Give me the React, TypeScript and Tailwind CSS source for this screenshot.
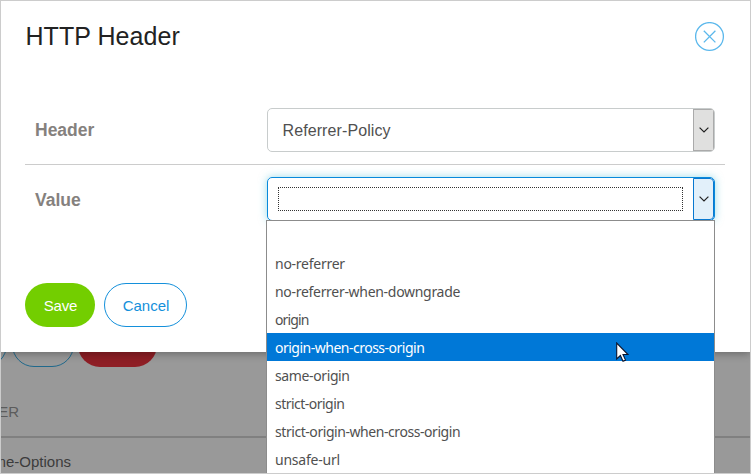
import React from "react";

const options = [
  { name: "", tracking: "" },
  { name: "no-referrer", tracking: "tracking-[-0.26px]" },
  { name: "no-referrer-when-downgrade", tracking: "tracking-[-0.3px]" },
  { name: "origin", tracking: "tracking-[-0.85px]" },
  { name: "origin-when-cross-origin", tracking: "tracking-[-0.5px]" },
  { name: "same-origin", tracking: "tracking-[-0.38px]" },
  { name: "strict-origin", tracking: "tracking-[-0.52px]" },
  { name: "strict-origin-when-cross-origin", tracking: "tracking-[-0.44px]" },
  { name: "unsafe-url", tracking: "tracking-[-0.22px]" },
];

function Chevron() {
  return (
    <svg width="10" height="6" viewBox="0 0 10 6" fill="none" stroke="#222" strokeWidth="1.2">
      <path d="M.6.6L5 5 9.4.6" />
    </svg>
  );
}

function Page() {
  return (
    <div className="flex h-full flex-col bg-[#999] pt-[322px]">
      <div className="-ml-[60px] flex h-11">
        <div className="mr-[5px] w-[66px] rounded-full border border-[#20698c]" />
        <div className="mr-1 w-[62px] rounded-full border border-[#20698c]" />
        <div className="w-[79px] rounded-full bg-[#8e1e25]" />
      </div>
      <div className="flex h-[71px] items-end border-b-2 border-[#808080] pb-[14px]">
        <div className="flex w-[18px] shrink-0 justify-end whitespace-nowrap text-[15px] leading-5 text-[#5c5c5c]">HEADER</div>
      </div>
      <div className="flex w-[70px] justify-end whitespace-nowrap pt-[14px] text-[15px] leading-5 text-[#3c3c3c]">X-Frame-Options</div>
    </div>
  );
}

function Menu() {
  return (
    <ul className="absolute -left-[2px] top-[42px] h-[254px] w-[449px] overflow-hidden border-x border-t border-[#8c8c8c] bg-white font-['Noto_Sans','Open_Sans',sans-serif] text-[14px] text-[#505050]">
      {options.map(({ name, tracking }) => (
        <li
          key={name}
          className={
            "h-7 pl-2 leading-[30px] " +
            tracking +
            (name === "origin-when-cross-origin" ? " bg-[#0078d7] text-white" : "")
          }
        >
          {name}
        </li>
      ))}
      <svg className="absolute left-[349px] top-[121px]" width="13" height="20" viewBox="0 0 13 20">
        <path d="M.7 1v16l3.7-3.5 2.6 5.7 2.5-1.1L7 12.5h5z" fill="#fff" stroke="#08132c" strokeWidth="1.1" />
      </svg>
    </ul>
  );
}

function Dialog() {
  return (
    <div className="absolute inset-x-0 top-0 h-[351px] bg-white px-6 shadow-[0_2px_8px_rgba(0,0,0,0.3)]">
      <div className="flex h-[97px] items-start justify-between pt-5">
        <h1 className="pl-[0.5px] text-[25px] leading-[30px] tracking-[0.05px] text-[#222]">HTTP Header</h1>
        <svg className="mr-px mt-px" width="30" height="30" viewBox="0 0 30 30" fill="none" stroke="#5bb8ec" strokeWidth="1.3">
          <circle cx="14.5" cy="14.5" r="13.9" />
          <path d="M8.8 8.8l11.6 11.6M20.4 8.8L8.8 20.4" />
        </svg>
      </div>
      <div className="flex h-[67px] w-[700px] items-start border-b border-[#ccc] pl-[10px] pt-[10px]">
        <label className="w-[232px] text-[17.5px] font-bold leading-[44px] text-[#85817e]">Header</label>
        <div className="flex h-11 w-[448px] overflow-hidden rounded-[5px] border border-[#c8cccc]">
          <div className="flex-1 pl-[14.5px] text-[16px] leading-[44px] tracking-[0.1px] text-[#505050]">Referrer-Policy</div>
          <div className="flex w-[21px] items-center justify-center border border-[#aaa] bg-[#e0e0df]">
            <Chevron />
          </div>
        </div>
      </div>
      <div className="flex h-[118px] items-start pl-[10px] pt-3">
        <label className="w-[232px] text-[17.5px] font-bold leading-[46px] text-[#85817e]">Value</label>
        <div className="relative flex h-11 w-[448px] rounded-[5px] border border-[#0889dc] shadow-[0_0_8px_rgba(70,190,215,0.55)]">
          <div className="flex-1 py-[9px] pl-[10px] pr-[10px]">
            <div className="h-6 border border-dotted border-[#333]" />
          </div>
          <div className="flex w-[21px] items-center justify-center rounded-r border border-[#0878d0] bg-[#e2f0fa]">
            <Chevron />
          </div>
          <Menu />
        </div>
      </div>
      <div className="flex gap-[9px] text-[15px]">
        <button className="h-11 w-[70px] rounded-full bg-[#73ce00] pl-px pt-[3px] tracking-[-0.2px] text-white">Save</button>
        <button className="h-11 w-[83px] rounded-full border border-[#1490db] pl-px pt-[3px] text-[#1490db]">Cancel</button>
      </div>
    </div>
  );
}

export default function App() {
  return (
    <div className="relative h-[474px] w-[751px] overflow-hidden border border-[#ccc] font-['Liberation_Sans',Arial,sans-serif]">
      <Page />
      <Dialog />
    </div>
  );
}
